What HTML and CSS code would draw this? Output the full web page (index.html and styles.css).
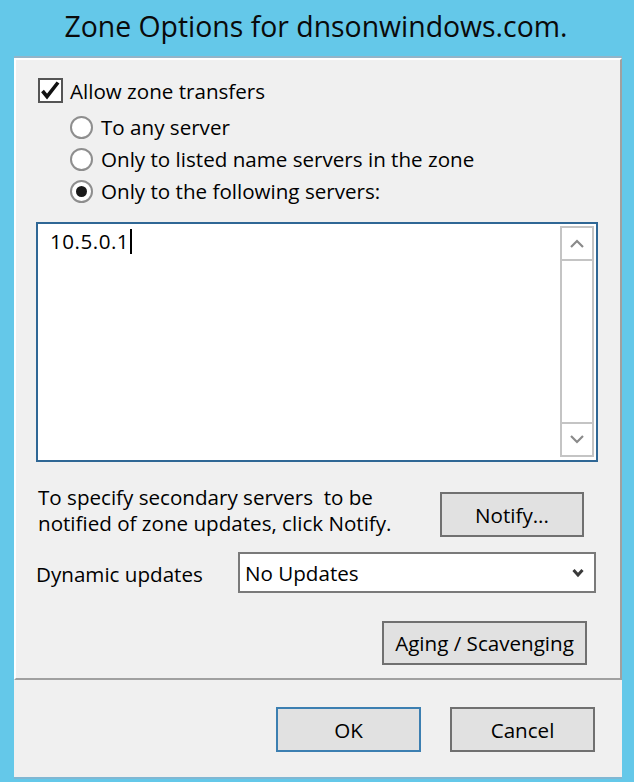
FILE: index.html
```html
<!DOCTYPE html>
<html>
<head>
<meta charset="utf-8">
<link rel="stylesheet" href="styles.css">
</head>
<body>
<div class="title">Zone Options for dnsonwindows.com.</div>
<div class="dialog">
  <div class="page">
    <div class="check-row">
      <span class="checkbox"><svg width="21" height="21" viewBox="0 0 21 21"><path d="M2.5 11 L7 16.5 L18 2.5" fill="none" stroke="#111" stroke-width="3.6"/></svg></span>
      <span>Allow zone transfers</span>
    </div>
    <div class="radios">
      <div class="radio-row"><span class="radio"></span><span>To any server</span></div>
      <div class="radio-row"><span class="radio"></span><span>Only to listed name servers in the zone</span></div>
      <div class="radio-row"><span class="radio checked"></span><span>Only to the following servers:</span></div>
    </div>
    <div class="listbox">
      <div class="list-text">10.5.0.1<span class="caret"></span></div>
      <div class="scrollbar">
        <div class="sb-btn up"><svg width="14" height="9" viewBox="0 0 14 9"><path d="M1 8 L7 2 L13 8" fill="none" stroke="#8a8a8a" stroke-width="2.2"/></svg></div>
        <div class="sb-track"></div>
        <div class="sb-btn down"><svg width="14" height="9" viewBox="0 0 14 9"><path d="M1 1 L7 7 L13 1" fill="none" stroke="#8a8a8a" stroke-width="2.2"/></svg></div>
      </div>
    </div>
    <div class="notify-row">
      <p class="notify-text">To specify secondary servers&nbsp; to be<br>notified of zone updates, click Notify.</p>
      <div class="btn notify-btn">Notify...</div>
    </div>
    <div class="dyn-row">
      <span class="dyn-label">Dynamic updates</span>
      <div class="select"><span>No Updates</span><svg width="12" height="10" viewBox="0 0 12 10"><path d="M1.5 2 L6 7 L10.5 2" fill="none" stroke="#3a3a3a" stroke-width="3"/></svg></div>
    </div>
    <div class="aging-row">
      <div class="btn aging-btn">Aging / Scavenging</div>
    </div>
  </div>
  <div class="footer">
    <div class="btn ok-btn">OK</div>
    <div class="btn cancel-btn">Cancel</div>
  </div>
</div>
</body>
</html>
```
FILE: styles.css
```css
html, body {
  margin: 0;
  padding: 0;
}
body {
  background: #64c8e9;
  font-family: "Open Sans", "Noto Sans", sans-serif;
  font-size: 20.6px;
  color: #000;
  width: 634px;
  height: 782px;
  overflow: hidden;
}
.title {
  height: 56px;
  line-height: 53px;
  text-align: center;
  font-size: 28.4px;
  color: #0a0a0a;
  padding-right: 2px;
}
.dialog {
  margin-left: 14px;
  width: 608px;
  border-top: 2px solid #93b4c8;
}
.page {
  box-sizing: border-box;
  height: 622px;
  background: #f0f0f0;
  border-top: 2px solid #ffffff;
  border-left: 2px solid #ffffff;
  border-right: 2px solid #a0a0a0;
  border-bottom: 2px solid #a0a0a0;
  display: flex;
  flex-direction: column;
}
.check-row {
  display: flex;
  align-items: center;
  height: 25px;
  margin-top: 18px;
  margin-left: 22px;
  gap: 7px;
}
.checkbox {
  box-sizing: border-box;
  width: 25px;
  height: 25px;
  border: 2px solid #555;
  background: #fff;
  display: flex;
  align-items: center;
  justify-content: center;
}
.radios {
  margin-top: 8px;
  margin-left: 54px;
  display: flex;
  flex-direction: column;
}
.radio-row {
  height: 32px;
  display: flex;
  align-items: center;
  gap: 8px;
}
.radio {
  box-sizing: border-box;
  width: 23px;
  height: 23px;
  border-radius: 50%;
  border: 2px solid #8e8e8e;
  background: #fff;
  display: flex;
  align-items: center;
  justify-content: center;
}
.radio.checked::after {
  content: "";
  width: 11px;
  height: 11px;
  border-radius: 50%;
  background: #1a1a1a;
}
.listbox {
  box-sizing: border-box;
  margin-top: 15px;
  margin-left: 20px;
  width: 562px;
  height: 240px;
  border: 2px solid #2f6795;
  background: #fff;
  display: flex;
}
.list-text {
  flex: 1;
  padding: 4px 0 0 12px;
  line-height: 26px;
  display: flex;
  align-items: flex-start;
  height: 26px;
  letter-spacing: 0.5px;
}
.caret {
  display: inline-block;
  width: 2px;
  height: 25px;
  background: #000;
  margin-left: 1px;
  margin-top: 1px;
}
.scrollbar {
  box-sizing: border-box;
  width: 34px;
  margin: 2px 2px 3px 0;
  border: 2px solid #c4c4c4;
  display: flex;
  flex-direction: column;
}
.sb-btn {
  height: 31px;
  display: flex;
  align-items: center;
  justify-content: center;
}
.sb-btn.up {
  border-bottom: 2px solid #c4c4c4;
}
.sb-btn.down {
  border-top: 2px solid #c4c4c4;
}
.sb-track {
  flex: 1;
}
.notify-row {
  margin-top: 22px;
  padding: 0 36px 0 22px;
  display: flex;
  justify-content: space-between;
  align-items: flex-start;
}
.notify-text {
  margin: 0;
  line-height: 26px;
}
.btn {
  box-sizing: border-box;
  background: #e1e1e1;
  border: 2px solid #707070;
  display: flex;
  align-items: center;
  justify-content: center;
}
.notify-btn {
  margin-top: 8px;
  width: 144px;
  height: 45px;
}
.dyn-row {
  margin-top: 15px;
  margin-left: 20px;
  display: flex;
  align-items: center;
}
.dyn-label {
  flex: 0 0 202px;
  padding-top: 3px;
}
.select {
  box-sizing: border-box;
  width: 358px;
  height: 41px;
  border: 2px solid #7a7a7a;
  background: #fff;
  display: flex;
  align-items: center;
  justify-content: space-between;
  padding: 0 10px 0 5px;
}
.aging-row {
  margin-top: 28px;
  padding-right: 33px;
  display: flex;
  justify-content: flex-end;
}
.aging-btn {
  width: 205px;
  height: 44px;
}
.footer {
  box-sizing: border-box;
  height: 99px;
  background: #f0f0f0;
  border-bottom: 2px solid #80b7d3;
  display: flex;
  justify-content: flex-end;
  align-items: flex-start;
  padding: 27px 27px 0 0;
  gap: 29px;
}
.ok-btn, .cancel-btn {
  width: 145px;
  height: 45px;
}
.ok-btn {
  border-color: #3c7fb1;
}
```
